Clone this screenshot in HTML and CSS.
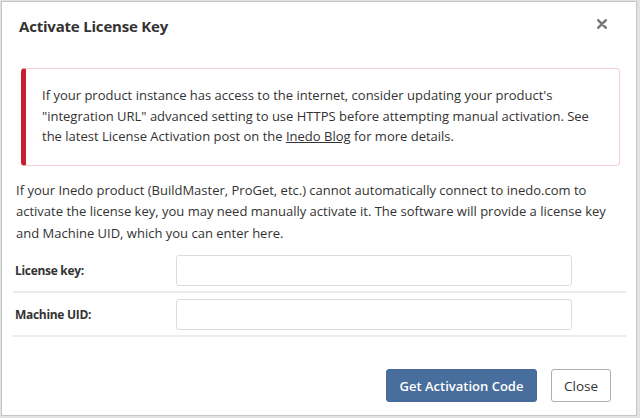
FILE: index.html
```html
<!DOCTYPE html>
<html>
<head>
<meta charset="utf-8">
<link rel="stylesheet" href="styles.css">
</head>
<body>
<div class="modal">
  <div class="modal-header">
    <h4 class="title">Activate License Key</h4>
    <svg class="close" width="10" height="10" viewBox="0 0 10 10"><path d="M1.3 1.3 L8.7 8.7 M8.7 1.3 L1.3 8.7" stroke="#7a7a7a" stroke-width="2.6" stroke-linecap="round"/></svg>
  </div>
  <div class="modal-body">
    <div class="alert">
      If your product instance has access to the internet, consider updating your product's "integration URL" advanced setting to use HTTPS before attempting manual activation. See the latest License Activation post on the <a href="#">Inedo Blog</a> for more details.
    </div>
    <p class="intro">If your Inedo product (BuildMaster, ProGet, etc.) cannot automatically connect to inedo.com to activate the license key, you may need manually activate it. The software will provide a license key and Machine UID, which you can enter here.</p>
    <div class="form">
      <div class="row">
        <label>License key:</label>
        <input type="text">
      </div>
      <div class="row">
        <label>Machine UID:</label>
        <input type="text">
      </div>
    </div>
  </div>
  <div class="modal-footer">
    <button class="btn primary">Get Activation Code</button>
    <button class="btn default">Close</button>
  </div>
</div>
</body>
</html>
```
FILE: styles.css
```css
html, body {
  margin: 0;
  padding: 0;
  background: #e2e2e2;
  height: 418px;
  overflow: hidden;
}
body {
  font-family: "Open Sans", "Noto Sans", sans-serif;
  font-size: 13px;
  color: #333;
}
.modal {
  margin: 1px 0 0 1px;
  width: 634px;
  height: 413px;
  background: #fff;
  border: 1px solid #c6c6c6;
  display: flex;
  flex-direction: column;
}
.modal-header {
  display: flex;
  align-items: center;
  justify-content: space-between;
  padding: 9px 29px 0 17px;
  height: 30px;
}
.title {
  margin: 0;
  font-size: 15px;
  font-weight: 700;
  letter-spacing: -0.2px;
  color: #333;
}
.close {
  display: block;
  margin-top: -4px;
}
.modal-body {
  padding: 27px 10px 0 11px;
}
.alert {
  margin: 0 6px 0 8px;
  padding: 16px 20px 18px 16px;
  border: 1px solid #f6cdd1;
  border-left: 5px solid #c8202f;
  border-radius: 4px;
  line-height: 20.5px;
  color: #333;
}
.alert a {
  color: #333;
}
.intro {
  margin: 14px 0 0 3px;
  line-height: 21.5px;
}
.form {
  margin-top: 5px;
}
.row {
  display: flex;
  align-items: center;
  border-bottom: 2px solid #ececec;
  padding: 6px 0 5px;
}
.row label {
  width: 161px;
  padding-left: 2px;
  font-weight: 700;
  font-size: 12px;
  letter-spacing: -0.3px;
}
.row input {
  width: 396px;
  height: 31px;
  box-sizing: border-box;
  border: 1px solid #dcdcdc;
  border-radius: 3px;
}
.modal-footer {
  display: flex;
  justify-content: flex-end;
  gap: 14px;
  padding: 32px 25px 0 0;
}
.btn {
  height: 33px;
  font-family: inherit;
  font-size: 13.5px;
  border-radius: 3px;
  padding: 0;
}
.btn.primary {
  width: 151px;
  background: #476e9c;
  border: 1px solid #44699a;
  color: #fff;
  font-weight: 600;
  font-size: 13px;
}
.btn.default {
  width: 60px;
  background: #fff;
  border: 1px solid #adadad;
  color: #333;
}
```
